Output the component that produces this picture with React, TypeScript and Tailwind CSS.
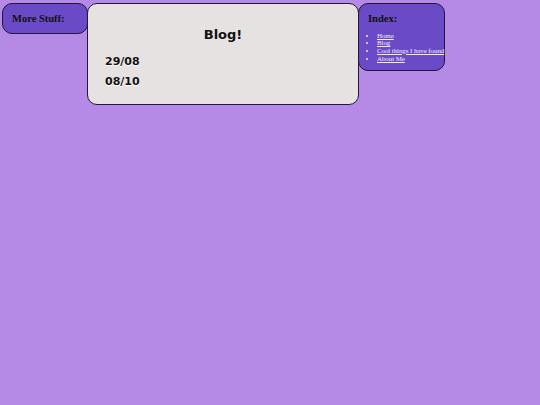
import React from 'react';

const serif = { fontFamily: '"Liberation Serif", "Times New Roman", serif' };

export default function App() {
  const links = ['Home', 'Blog', 'Cool things I have found', 'About Me'];

  return (
    <div className="min-h-[405px] w-full bg-[#b48ae6] pt-[3px] pl-[2px]">
      <div className="flex items-start">
        {/* Left sidebar */}
        <div className="w-[86px] h-[31px] bg-[#6a4ac6] border-[1.5px] border-[#231838] rounded-[10px] pl-[9px] pt-[10px]" style={serif}>
          <h3 className="text-[10.5px] font-bold text-[#111] leading-none">More Stuff:</h3>
        </div>

        {/* Main */}
        <div
          className="w-[272px] h-[102px] -ml-px bg-[#e7e2e2] border-[1.5px] border-[#231838] rounded-[10px] pt-[24px] pl-[17px]"
          style={{ fontFamily: '"DejaVu Sans", Verdana, sans-serif' }}
        >
          <h1 className="text-center text-[13px] font-bold text-[#111] leading-none pr-[17px]">Blog!</h1>
          <div className="mt-[15px] flex flex-col gap-[9px]">
            <p className="text-[11px] font-bold text-[#111] leading-[11px] [text-shadow:0_1px_0_#fff]">29/08</p>
            <p className="text-[11px] font-bold text-[#111] leading-[11px] [text-shadow:0_1px_0_#fff]">08/10</p>
          </div>
        </div>

        {/* Right sidebar */}
        <div className="w-[87px] h-[68px] -ml-px bg-[#6a4ac6] border-[1.5px] border-[#231838] rounded-[10px] pl-[9px] pt-[10px]" style={serif}>
          <h3 className="text-[10.5px] font-bold text-[#111] leading-none">Index:</h3>
          <ul className="mt-[8px] list-disc pl-[9px] text-[7px] leading-[7.7px] text-[#f2eefc] whitespace-nowrap tracking-[-0.1px]">
            {links.map((l) => (
              <li key={l}>
                <a href="#" className="underline">{l}</a>
              </li>
            ))}
          </ul>
        </div>
      </div>
    </div>
  );
}
